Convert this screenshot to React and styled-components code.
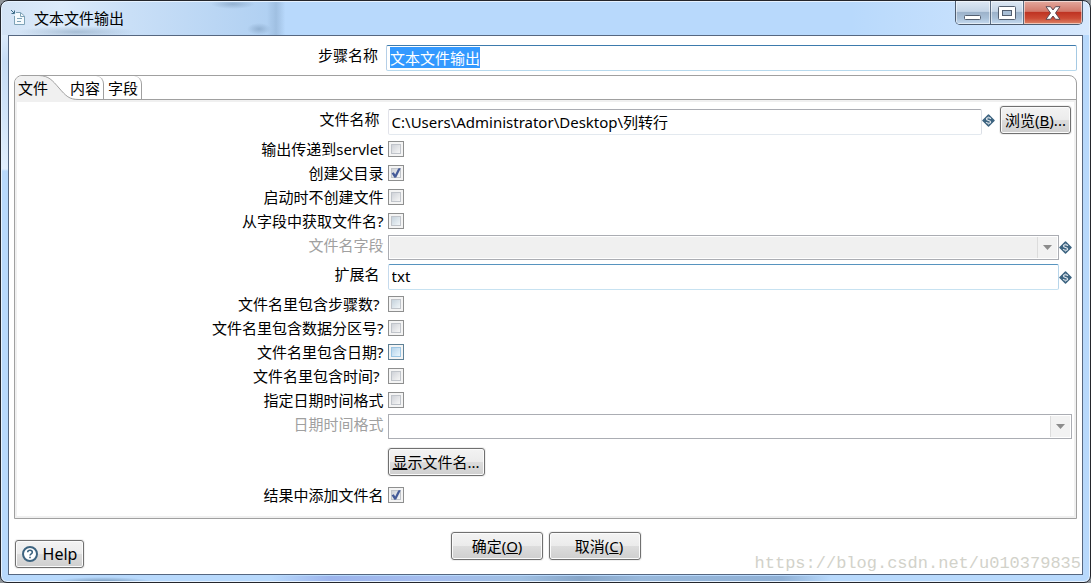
import React, { useEffect, useRef, useState } from "react";
import styled, { createGlobalStyle, css } from "styled-components";

const Global = createGlobalStyle`
  *, *::before, *::after { box-sizing: border-box; }
  body {
    margin: 0;
    background: #8f9499;
    color: #000;
    font: 15px/20px "Noto Sans", "Noto Sans CJK SC", sans-serif;
  }
  button, input, select { font: inherit; color: inherit; }
`;

const Window = styled.div`
  position: relative;
  display: flex;
  flex-direction: column;
  min-height: 100vh;
  padding: 0 7px 7px;
  border: 1px solid #24262c;
  border-radius: 8px 8px 7px 7px;
  background:
    radial-gradient(ellipse 60px 6px at 75px 31px, #8fa9c3aa, transparent),
    radial-gradient(ellipse 12px 6px at 258px 28px, #7d9cbd99, transparent),
    radial-gradient(ellipse 22px 5px at 232px 3px, #7d9cbd99, transparent),
    linear-gradient(90deg, transparent 266px, #96b6d8aa 275px, transparent 284px) 0 0 / 100% 34px no-repeat,
    linear-gradient(90deg, #d3e3f5 0, #dcebfb 60px, #c9dff7 130px, #b0d0f2 270px, transparent 285px) 0 0 / 100% 34px no-repeat,
    linear-gradient(#dcebfb 34px, #c6dcf5 60px, #d3e6fa 120px, #e2effd 168px, transparent 170px) 0 0 / 8px 100% no-repeat,
    radial-gradient(ellipse 50px 5px at 102px 100%, #5f7f9fcc, transparent),
    linear-gradient(90deg, transparent 270px, #9cb4ec 330px, #a5bdee 430px, #9fbfe2 520px, #86a5c8 580px, #98b8db 640px, #8fb0d5 780px, transparent 830px) 0 100% / 100% 6px no-repeat,
    linear-gradient(90deg, transparent 78%, #d6e8fd) 0 0 / 100% 34px no-repeat,
    #b8d9fc;
  box-shadow: inset 0 0 0 1px #e6f2ff;
`;

const TitleBar = styled.header`
  display: flex;
  align-items: flex-start;
  height: 34px;
  padding-left: 2px;
`;

const TitleIcon = styled.svg`
  width: 16px;
  height: 18px;
  margin-top: 7px;
`;

const Title = styled.h1`
  flex: 1;
  margin: 7px 0 0 8px;
  font-size: 15px;
  font-weight: 400;
  line-height: 20px;
`;

const Caption = styled.div`
  display: flex;
  height: 24px;
  border: 1px solid #4d5b6e;
  border-top: 0;
  border-radius: 0 0 5px 5px;
  overflow: hidden;
`;

const CaptionButton = styled.button`
  display: grid;
  place-items: center;
  width: ${(p) => p.$width}px;
  padding: 0;
  border: 0;
  border-left: ${(p) => (p.$first ? "0" : "1px solid #5a6b80")};
  background: ${(p) =>
    p.$close
      ? "linear-gradient(#e3a99e 0, #d2796b 45%, #bf3423 50%, #cc4a34 75%, #dd8568 100%)"
      : "linear-gradient(#dde8f4 0, #c4d4e6 45%, #9db3cb 50%, #a9c0d8 75%, #c6dbf0 100%)"};
  box-shadow: inset 0 0 0 1px #ffffff88;
`;

const Client = styled.main`
  position: relative;
  flex: 1;
  padding: 9px 5px 6px;
  border: 1px solid #566780;
  background: #fff;
`;

const NameRow = styled.div`
  display: grid;
  grid-template-columns: 35% 1fr;
  height: 30px;
  align-items: start;
`;

const Label = styled.label`
  justify-self: end;
  padding-right: ${(p) => (p.$wide ? 8 : 4)}px;
  color: ${(p) => (p.$disabled ? "#a0a0a0" : "#000")};
  white-space: nowrap;
`;

const edge = {
  focus: css`border-color: #3d7bad #a4c9e3 #b7d9ed #b5cfe7;`,
  hover: css`border-color: #5794bf #b7d5ea #c7e2f1 #c5daed;`,
  plain: css`border-color: #abadb3 #dbdfe6 #e3e9ef #e2e3ea;`,
};

const TextInput = styled.input`
  width: 100%;
  min-width: 0;
  height: 26px;
  padding: 0 3px 2px;
  border: 1px solid;
  border-radius: 2px;
  background: #fff;
  outline: none;
  line-height: 20px;
  ${(p) => edge[p.$edge || "plain"]}
  &::selection { background: #3399ff; color: #fff; }
`;

const Folder = styled.section`
  border: 1px solid #a0a0a0;
  border-radius: 8px 8px 0 0;
`;

const TabList = styled.div`
  display: flex;
  height: 24px;
  border-bottom: 1px solid #a0a0a0;
`;

const Tab = styled.button`
  position: relative;
  width: ${(p) => p.$width}px;
  height: 23px;
  padding: 0 3px 0 0;
  border: 0;
  border-right: ${(p) => (p.$selected ? "0" : "1px solid #a0a0a0")};
  border-radius: 0 8px 0 0;
  background: none;
  text-align: ${(p) => (p.$selected ? "left" : "right")};
  padding-left: ${(p) => (p.$selected ? 3 : 0)}px;
  white-space: nowrap;
`;

const TabShape = styled.svg`
  position: absolute;
  left: 0;
  top: 0;
  width: 64px;
  height: 24px;
`;

const TabText = styled.span`
  position: relative;
`;

const Panel = styled.div`
  padding: 4px 2px 9px;
  border: 2px solid #f0f0f0;
`;

const Row = styled.div`
  display: grid;
  grid-template-columns: 35% 1fr;
`;

const CheckRow = styled(Row)`
  height: 24px;
  align-items: center;
`;

const FieldRow = styled(Row)`
  height: ${(p) => p.$height}px;
  padding-top: ${(p) => p.$top || 0}px;
  align-items: start;
`;

const ButtonRow = styled(Row)`
  padding: 8px 0 7px;
`;

const Field = styled.div`
  display: flex;
  align-items: center;
`;

const FileRow = styled(FieldRow)`
  ${Label} { padding-top: 3px; }
`;

const FileField = styled(Field)`
  height: 29px;
  padding-right: 1px;
  ${TextInput} { align-self: flex-end; }
  button { align-self: flex-start; margin-left: 5px; }
`;

const Variable = styled.svg`
  flex: none;
  width: 13px;
  height: 13px;
`;

const CheckWrap = styled.span`
  position: relative;
  display: block;
  width: 16px;
  height: 16px;
`;

const CheckInput = styled.input`
  appearance: none;
  display: block;
  width: 16px;
  height: 16px;
  margin: 0;
  border: 1px solid ${(p) => (p.$tint === "hot" ? "#5f8196" : "#8e8f8f")};
  background: ${(p) =>
      p.$tint === "hot"
        ? "linear-gradient(135deg, #b5d3ea, #e9f6fe)"
        : p.$tint === "cool"
        ? "linear-gradient(135deg, #c5d2dc, #f1f6f9)"
        : "linear-gradient(135deg, #cfd2d8, #f6f6f6)"}
    content-box, #f4f4f4;
  padding: 3px;
  box-shadow: inset 0 0 0 2px #f4f4f4,
    inset 0 0 0 3px ${(p) => (p.$tint === "hot" ? "#9cc6e4" : "#c0c4ca")};
`;

const CheckMark = styled.svg`
  position: absolute;
  inset: 0;
  pointer-events: none;
`;

const SelectWrap = styled.span`
  position: relative;
  display: block;
  flex: 1;
  height: 25px;
`;

const Select = styled.select`
  appearance: none;
  display: block;
  width: 100%;
  height: 25px;
  padding: 0 24px 0 3px;
  border: 1px solid #abadb3;
  border-radius: 0;
  background: ${(p) => (p.$grey ? "#f0f0f0" : "#fff")};
  box-shadow: inset 0 0 0 1px #fff;
  opacity: 1;
`;

const Arrow = styled.span`
  position: absolute;
  top: 2px;
  right: 2px;
  display: grid;
  place-items: center;
  width: 20px;
  height: 21px;
  border-left: 1px solid #dcdcdc;
  background: #f2f2f2;
  pointer-events: none;
`;

const Button = styled.button`
  display: inline-flex;
  align-items: center;
  justify-content: center;
  flex: none;
  width: ${(p) => p.$width}px;
  height: 28px;
  padding: 0;
  border: 1px solid #707070;
  border-radius: 3px;
  background: linear-gradient(#f3f3f3 0, #ebebeb 50%, #dddddd 50%, #cfcfcf 100%);
  box-shadow: inset 0 0 0 1px #fbfbfb, 0 0 0 1px #f0f0f0;
  white-space: nowrap;
`;

const Footer = styled.footer`
  display: grid;
  grid-template-columns: 1fr auto 1fr;
  align-items: start;
  padding: 13px 0 0 1px;
`;

const HelpButton = styled(Button)`
  margin-top: 8px;
  gap: 5px;
  font-size: 16px;
`;

const Actions = styled.div`
  display: flex;
  gap: 6px;
`;

const Watermark = styled.span`
  position: absolute;
  right: 1px;
  bottom: 0;
  color: #d2d2ca;
  font: 17px/20px "Liberation Mono", monospace;
`;

function VariableIcon() {
  return (
    <Variable viewBox="0 0 13 13" aria-hidden="true">
      <path d="M6.5 1 L12 6.5 L6.5 12 L1 6.5Z" fill="#3d6480" stroke="#3d6480" strokeWidth="1.500" strokeLinejoin="round" />
      <path d="M8.700 5C8.400 3.300 4.500 3.200 4.500 5C4.500 6.900 8.600 6.100 8.600 8C8.600 9.800 4.600 9.700 4.300 8" fill="none" stroke="#e4eaf0" strokeWidth="1.200" />
      <path d="M6.500 2.500V4M6.500 9.200V10.700" stroke="#b4c3d0" />
    </Variable>
  );
}

function CheckLine({ id, label, wide, tint, defaultChecked = false }) {
  const [checked, setChecked] = useState(defaultChecked);
  return (
    <CheckRow>
      <Label htmlFor={id} $wide={wide}>{label}</Label>
      <CheckWrap>
        <CheckInput id={id} type="checkbox" $tint={tint} checked={checked} onChange={(e) => setChecked(e.target.checked)} />
        {checked && (
          <CheckMark width="16" height="16" viewBox="0 0 16 16" aria-hidden="true">
            <path d="M3.600 8.200L5.800 7.200L7.200 9.400L10.200 3.600L12.400 3L12.200 4.600L8.200 12.400L6.400 12.800Z" fill="#445a98" />
          </CheckMark>
        )}
      </CheckWrap>
    </CheckRow>
  );
}

function DropDown({ id, grey }) {
  return (
    <SelectWrap>
      <Select id={id} disabled $grey={grey} />
      <Arrow>
        <svg width="9" height="5" viewBox="0 0 9 5" aria-hidden="true">
          <path d="M0 0H9L4.5 5Z" fill="#8c8c8c" />
        </svg>
      </Arrow>
    </SelectWrap>
  );
}

const tabs = [
  { name: "文件", width: 55 },
  { name: "内容", width: 34 },
  { name: "字段", width: 38 },
];

export default function App() {
  const nameRef = useRef(null);
  useEffect(() => {
    nameRef.current.focus();
    nameRef.current.select();
  }, []);

  return (
    <>
      <Global />
      <Window>
        <TitleBar>
          <TitleIcon viewBox="0 0 16 18" aria-hidden="true">
            <path d="M6 4.500H10.500L14.500 8V16.500H4.500V8" fill="#f5fafd" stroke="#7fa3b7" />
            <path d="M10.500 4.500V8.500H14.500" fill="none" stroke="#7fa3b7" />
            <path d="M7 10.500H12M7 13.500H11" stroke="#7fa3b7" />
            <path d="M1 2L4 5M4.500 2.500V5.500H1.500" fill="none" stroke="#3f6d88" />
          </TitleIcon>
          <Title>文本文件输出</Title>
          <Caption>
            <CaptionButton $width={34} $first aria-label="最小化">
              <svg width="18" height="14" viewBox="0 0 18 14"><rect x="0.500" y="9.500" width="16" height="4" rx="1" fill="#fff" stroke="#535f70" /></svg>
            </CaptionButton>
            <CaptionButton $width={33} aria-label="最大化">
              <svg width="18" height="14" viewBox="0 0 18 14">
                <rect x="0.500" y="0.500" width="17" height="13" rx="1" fill="#fff" stroke="#535f70" />
                <rect x="4.500" y="4.500" width="9" height="5" fill="#a9bfd6" stroke="#535f70" />
              </svg>
            </CaptionButton>
            <CaptionButton $width={59} $close aria-label="关闭">
              <svg width="16" height="14" viewBox="0 0 16 14">
                <path d="M1 .7H5.500L8 4L10.500 .7H15L10.500 7L15 13.300H10.500L8 10L5.500 13.300H1L5.500 7Z" fill="#fff" stroke="#5d4a54" strokeLinejoin="round" />
              </svg>
            </CaptionButton>
          </Caption>
        </TitleBar>
        <Client>
          <NameRow>
            <Label htmlFor="step" $wide>步骤名称</Label>
            <TextInput id="step" ref={nameRef} $edge="focus" defaultValue="文本文件输出" />
          </NameRow>
          <Folder>
            <TabList role="tablist">
              {tabs.map((tab, i) => (
                <Tab key={tab.name} role="tab" aria-selected={i === 0} $selected={i === 0} $width={tab.width}>
                  {i === 0 && (
                    <TabShape viewBox="0 0 64 24" aria-hidden="true">
                      <path d="M0 24V6Q1 1 7 0H26C34 0 37 4 44 12S54 23.500 62 23.500V24Z" fill="#f0f0f0" />
                      <path d="M24 -.5C34 0 37 4 44 12S54 23.500 64 23.500" fill="none" stroke="#a0a0a0" />
                    </TabShape>
                  )}
                  <TabText>{tab.name}</TabText>
                </Tab>
              ))}
            </TabList>
            <Panel role="tabpanel">
              <FileRow $height={31}>
                <Label htmlFor="file" $wide>文件名称</Label>
                <FileField>
                  <TextInput id="file" defaultValue="C:\Users\Administrator\Desktop\列转行" />
                  <VariableIcon />
                  <Button $width={71}>浏览(<u>B</u>)...</Button>
                </FileField>
              </FileRow>
              <CheckLine id="servlet" label="输出传递到servlet" />
              <CheckLine id="parent" label="创建父目录" defaultChecked />
              <CheckLine id="defer" label="启动时不创建文件" />
              <CheckLine id="from-field" label="从字段中获取文件名?" tint="cool" />
              <FieldRow $height={28} $top={2}>
                <Label htmlFor="name-field" $disabled>文件名字段</Label>
                <Field><DropDown id="name-field" grey /><VariableIcon /></Field>
              </FieldRow>
              <FieldRow $height={31} $top={3}>
                <Label htmlFor="ext" $wide>扩展名</Label>
                <Field><TextInput id="ext" $edge="hover" defaultValue="txt" /><VariableIcon /></Field>
              </FieldRow>
              <CheckLine id="step-nr" label="文件名里包含步骤数?" wide tint="cool" />
              <CheckLine id="part-nr" label="文件名里包含数据分区号?" />
              <CheckLine id="with-date" label="文件名里包含日期?" tint="hot" />
              <CheckLine id="with-time" label="文件名里包含时间?" wide />
              <CheckLine id="custom" label="指定日期时间格式" />
              <FieldRow $height={28} $top={2}>
                <Label htmlFor="format" $disabled>日期时间格式</Label>
                <Field><DropDown id="format" /></Field>
              </FieldRow>
              <ButtonRow>
                <span />
                <Field><Button $width={97}><u>显</u>示文件名...</Button></Field>
              </ButtonRow>
              <CheckLine id="result" label="结果中添加文件名" defaultChecked />
            </Panel>
          </Folder>
          <Footer>
            <div>
              <HelpButton $width={69}>
                <svg width="16" height="16" viewBox="0 0 16 16" aria-hidden="true">
                  <circle cx="8" cy="8" r="7" fill="#fff" stroke="#3d6480" strokeWidth="2" />
                  <path d="M5.700 6.300C5.700 3.600 10.300 3.700 10.300 6.200C10.300 7.800 8 7.800 8 9.600M8 10.800V12.300" fill="none" stroke="#3d6480" strokeWidth="1.600" />
                </svg>
                Help
              </HelpButton>
            </div>
            <Actions>
              <Button $width={92}>确定(<u>O</u>)</Button>
              <Button $width={92}>{"\u00a0\u00a0"}取消(<u>C</u>)</Button>
            </Actions>
          </Footer>
          <Watermark>https://blog.csdn.net/u010379835</Watermark>
        </Client>
      </Window>
    </>
  );
}
